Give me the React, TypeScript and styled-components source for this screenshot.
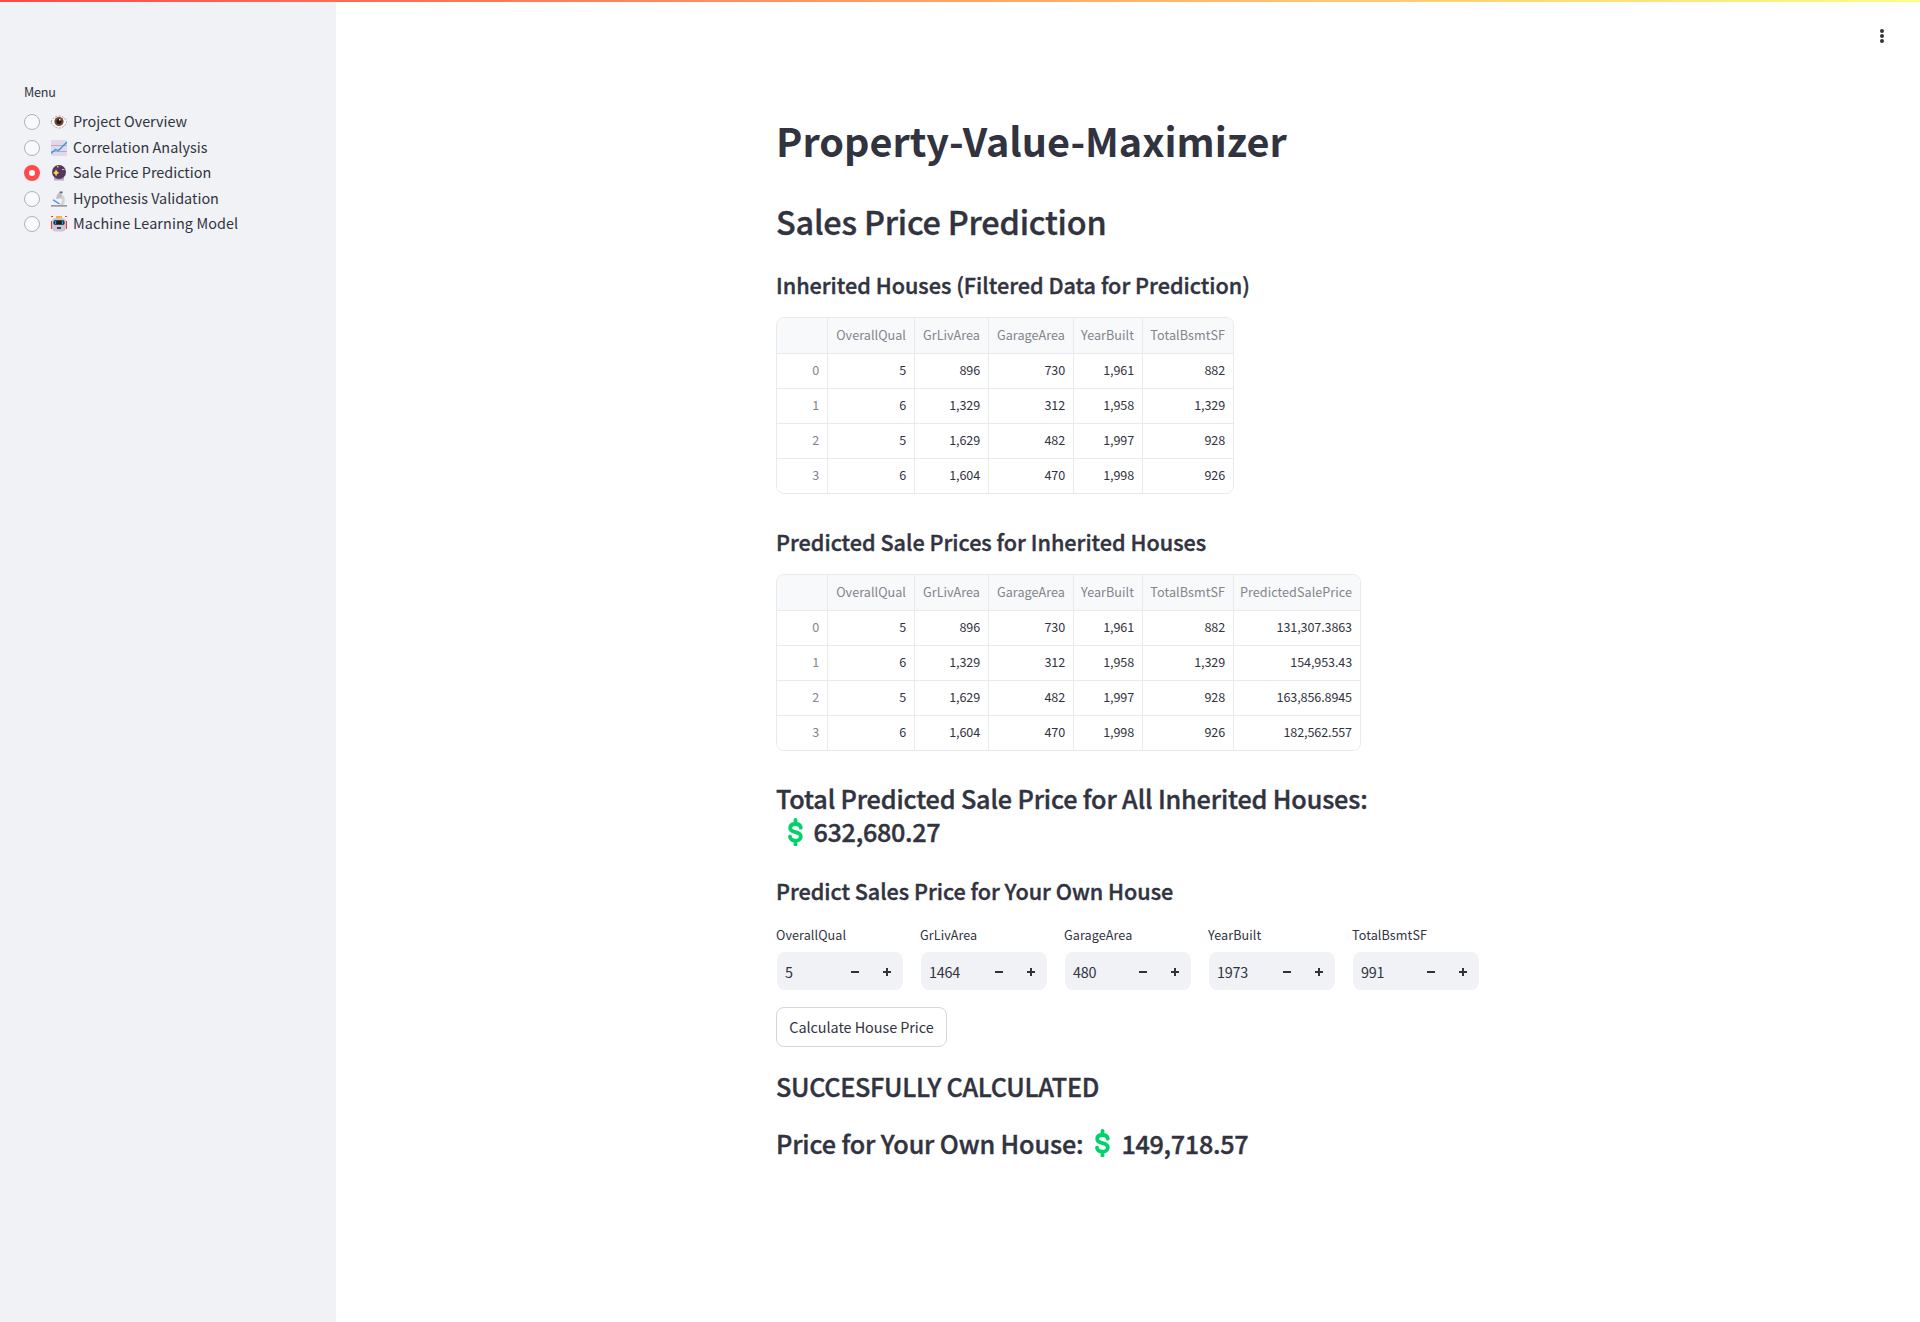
import React from "react";
import styled, { createGlobalStyle } from "styled-components";

const ink = "#31333f";
const line = "#e9eaeb";

const GlobalStyle = createGlobalStyle`
  * { box-sizing: border-box; }
  body {
    margin: 0;
    background: #fff;
    color: ${ink};
    font-family: "Noto Sans CJK SC", "Noto Sans", sans-serif;
  }
`;

const Page = styled.div`
  display: flex;
  height: 1322px;
  position: relative;
  overflow: hidden;
`;

const Decoration = styled.div`
  position: absolute;
  inset: 0 0 auto 0;
  height: 2px;
  background: linear-gradient(90deg, #ff4b4b, #fffd80);
`;

const Sidebar = styled.aside`
  width: 336px;
  flex: none;
  padding: 82px 24px 0;
  background: #f0f2f6;
`;

const MenuLabel = styled.div`
  font-size: 12.6px;
  line-height: 20px;
  letter-spacing: -0.2px;
`;

const RadioList = styled.div`
  display: flex;
  flex-direction: column;
  margin-top: 7.5px;
`;

const RadioRow = styled.div`
  display: flex;
  align-items: center;
  height: 25.5px;
  white-space: nowrap;

  svg { margin: 0 6px 0 11px; flex: none; }
`;

const RadioText = styled.span<{ $track?: number }>`
  padding-bottom: 2.4px;
  font-size: 14.4px;
  line-height: 22px;
  letter-spacing: ${(p) => p.$track ?? 0}px;
`;

const Radio = styled.span<{ $on?: boolean }>`
  width: 16px;
  height: 16px;
  flex: none;
  border-radius: 50%;
  background: ${(p) => (p.$on ? "#fff" : "#f9f9fb")};
  border: ${(p) => (p.$on ? "5px solid #ff4b4b" : "1px solid #b0b1b9")};
`;

const Main = styled.main`
  flex: 1;
  display: flex;
  justify-content: center;
  padding-top: 114px;
  position: relative;
`;

const Kebab = styled.div`
  position: absolute;
  top: 29px;
  right: 36px;
  display: flex;
  flex-direction: column;
  gap: 1px;

  i { width: 4px; height: 4px; border-radius: 50%; background: ${ink}; }
`;

const Column = styled.div`
  width: 704px;
`;

const Title = styled.h1`
  margin: 0;
  font-size: 39.6px;
  font-weight: 700;
  line-height: 52px;
`;

const Heading = styled.h2<{ $size: number; $line: number; $top: number; $track?: number }>`
  margin: ${(p) => p.$top}px 0 0;
  font-size: ${(p) => p.$size}px;
  font-weight: 500;
  line-height: ${(p) => p.$line}px;
  letter-spacing: ${(p) => p.$track ?? 0}px;
  -webkit-text-stroke: 0.4px ${ink};
  white-space: nowrap;
`;

const Amount = styled.span<{ $indent: number }>`
  display: inline-flex;
  align-items: center;
  gap: 11px;
  margin-left: ${(p) => p.$indent}px;
  vertical-align: top;
  letter-spacing: -0.3px;
`;

const Grid = styled.div<{ $cols: string; $top: number }>`
  display: grid;
  grid-template-columns: ${(p) => p.$cols};
  grid-template-rows: 36px 35px 35px 35px 34px;
  width: max-content;
  margin-top: ${(p) => p.$top}px;
  border: 1px solid ${line};
  border-radius: 8px;
  overflow: hidden;
  font-size: 12.6px;
`;

const Cell = styled.div<{ $head?: boolean; $muted?: boolean; $lastCol: boolean; $lastRow?: boolean }>`
  display: flex;
  align-items: center;
  justify-content: flex-end;
  padding: 0 8px ${(p) => (p.$head ? 2 : p.$lastRow ? 2.5 : 3.5)}px 0;
  white-space: nowrap;
  letter-spacing: ${(p) => (p.$head ? 0.05 : -0.12)}px;
  color: ${(p) => (p.$head || p.$muted ? "#83848c" : ink)};
  background: ${(p) => (p.$head ? "#f8f9fb" : "#fff")};
  border-right: ${(p) => (p.$lastCol ? "none" : `1px solid ${line}`)};
  border-bottom: ${(p) => (p.$lastRow ? "none" : `1px solid ${line}`)};
`;

const Fields = styled.div`
  display: grid;
  grid-template-columns: repeat(5, 128px);
  gap: 16px;
  margin-top: 20px;
`;

const FieldLabel = styled.div`
  font-size: 12.6px;
  line-height: 20px;
  letter-spacing: 0.08px;
`;

const NumberBox = styled.div`
  display: flex;
  align-items: center;
  height: 38px;
  margin: 7px 1px 1px;
  padding: 1px 12px 0 8px;
  border-radius: 8px;
  background: #f0f2f6;
  font-size: 14.4px;
  letter-spacing: -0.2px;

  span { flex: 1; padding-bottom: 1px; }
  svg + svg { margin-left: 24px; }
`;

const Button = styled.button`
  display: block;
  width: 171px;
  height: 40px;
  margin-top: 16px;
  padding: 0 0 2px;
  border: 1px solid #d6d6d9;
  border-radius: 8px;
  background: #fff;
  color: ${ink};
  font: 400 14.4px "Noto Sans CJK SC", "Noto Sans", sans-serif;
  letter-spacing: -0.05px;
`;

const Eye = () => (
  <svg width="16" height="16" viewBox="0 0 16 16">
    <path d="M0 8Q3 2 8 2T16 8Q13 14 8 14T0 8Z" fill="#fff" />
    <path d="M0 8Q3 2 8 2T16 8Q13 14 8 14T0 8Z" fill="none" stroke="#9b9b9b" strokeWidth="1" strokeDasharray="2 1.3" />
    <circle cx="8" cy="7.5" r="4.6" fill="#7d4533" />
    <circle cx="8" cy="7.5" r="2.5" fill="#1c1c1c" />
    <rect x="8" y="5" width="1.5" height="1.5" fill="#fff" />
  </svg>
);

const Chart = () => (
  <svg width="16" height="16" viewBox="0 0 16 16">
    <rect width="16" height="16" rx="1.5" fill="#e1d8ec" />
    <path d="M0 5.5H16M0 11.5H16" stroke="#b4acbc" />
    <path d="M0 13.5L4.5 9.5L7.5 10.5L16 2" fill="none" stroke="#2896e8" strokeWidth="1.3" />
  </svg>
);

const CrystalBall = () => (
  <svg width="16" height="16" viewBox="0 0 16 16">
    <path d="M3 12H13V15.5H3Z" fill="#b4acbc" />
    <circle cx="8" cy="7" r="7" fill="#533566" />
    <path d="M5 4.3L6.2 6.6L8.2 8L6.2 9L5 11.6L4 9L2 8L4 6.6Z" fill="#fcd53f" />
    <path d="M6 1H7.5V2.5H6ZM11 4H13.5V5H11Z" fill="#f9c23c" />
  </svg>
);

const Microscope = () => (
  <svg width="16" height="16" viewBox="0 0 16 16">
    <path d="M8 3L13 5Q15 9 12.5 14H8.5Q12 11 10.5 8L6 7Z" fill="#d3d3d3" />
    <path d="M9 0L11.5 1L10 7L5 8L6 4Z" fill="#bebebe" />
    <path d="M9.5 0.5H11.5V2H8.5Z" fill="#636363" />
    <path d="M2 8.7L8.5 13" stroke="#3b85f5" strokeWidth="1.3" />
    <path d="M0 14H16V15.7H0Z" fill="#9b9b9b" />
  </svg>
);

const Robot = () => (
  <svg width="16" height="16" viewBox="0 0 16 16">
    <path d="M0 0.5H2M14 0.5H16" stroke="#f8312f" />
    <path d="M0.5 5V13M15.5 5V13" stroke="#f8312f" />
    <path d="M5 0H11V2H5Z" fill="#ffb02e" />
    <rect x="1" y="2" width="14" height="13.5" rx="4" fill="#cdc4d6" />
    <rect x="2.5" y="4.2" width="11" height="4.6" rx="1.5" fill="#1c1c1c" />
    <path d="M4.5 5V8M11.5 5V8" stroke="#00a6ed" strokeWidth="1.4" />
    <path d="M6 12H10" stroke="#321b41" strokeWidth="1.6" />
  </svg>
);

const Dollar = () => (
  <svg width="15" height="28" viewBox="0 0 15 28">
    <path
      d="M12.8 9.6C12.4 7.2 10.4 6 7.5 6C4.4 6 2.2 7.4 2.2 10C2.2 15.6 12.8 12.8 12.8 18.4C12.8 21 10.6 22.6 7.5 22.6C4.4 22.6 2.2 21 2 18.6M7.5 2V6M7.5 22.6V26.4"
      fill="none"
      stroke="#00d26a"
      strokeWidth="3.8"
      strokeLinecap="round"
    />
  </svg>
);

const Minus = () => (
  <svg width="8" height="8" viewBox="0 0 8 8"><path d="M0 4H8" stroke={ink} strokeWidth="2" /></svg>
);
const Plus = () => (
  <svg width="8" height="8" viewBox="0 0 8 8"><path d="M0 4H8M4 0V8" stroke={ink} strokeWidth="2" /></svg>
);

const menu = [
  { icon: <Eye />, label: "Project Overview" },
  { icon: <Chart />, label: "Correlation Analysis", track: 0.05 },
  { icon: <CrystalBall />, label: "Sale Price Prediction", on: true },
  { icon: <Microscope />, label: "Hypothesis Validation" },
  { icon: <Robot />, label: "Machine Learning Model", track: 0.1 },
];

const columns = ["", "OverallQual", "GrLivArea", "GarageArea", "YearBuilt", "TotalBsmtSF"];
const houses = [
  ["0", "5", "896", "730", "1,961", "882"],
  ["1", "6", "1,329", "312", "1,958", "1,329"],
  ["2", "5", "1,629", "482", "1,997", "928"],
  ["3", "6", "1,604", "470", "1,998", "926"],
];
const predictions = ["131,307.3863", "154,953.43", "163,856.8945", "182,562.557"];
const fields = [
  ["OverallQual", "5"],
  ["GrLivArea", "1464"],
  ["GarageArea", "480"],
  ["YearBuilt", "1973"],
  ["TotalBsmtSF", "991"],
];

function DataTable({ head, rows, cols, top }: { head: string[]; rows: string[][]; cols: string; top: number }) {
  const last = head.length - 1;
  return (
    <Grid $cols={cols} $top={top}>
      {head.map((h, i) => <Cell key={h} $head $lastCol={i === last}>{h}</Cell>)}
      {rows.map((row, r) =>
        row.map((value, i) => (
          <Cell key={`${r}-${i}`} $muted={i === 0} $lastCol={i === last} $lastRow={r === rows.length - 1}>
            {value}
          </Cell>
        ))
      )}
    </Grid>
  );
}

export default function App() {
  return (
    <Page>
      <GlobalStyle />
      <Sidebar>
        <MenuLabel>Menu</MenuLabel>
        <RadioList>
          {menu.map((m) => (
            <RadioRow key={m.label}>
              <Radio $on={m.on} />
              {m.icon}
              <RadioText $track={m.track}>{m.label}</RadioText>
            </RadioRow>
          ))}
        </RadioList>
      </Sidebar>
      <Main>
        <Kebab><i /><i /><i /></Kebab>
        <Column>
          <Title>Property-Value-Maximizer</Title>
          <Heading $size={32.4} $line={44} $top={33} $track={-0.2}>Sales Price Prediction</Heading>
          <Heading $size={21.6} $line={28} $top={28}>Inherited Houses (Filtered Data for Prediction)</Heading>
          <DataTable head={columns} rows={houses} cols="51px 87px 74px 85px 69px 90px" top={18} />
          <Heading $size={21.6} $line={28} $top={34}>Predicted Sale Prices for Inherited Houses</Heading>
          <DataTable
            head={[...columns, "PredictedSalePrice"]}
            rows={houses.map((h, i) => [...h, predictions[i]])}
            cols="51px 87px 74px 85px 69px 91px 126px"
            top={18}
          />
          <Heading $size={25.2} $line={33} $top={31} $track={-0.14}>
            Total Predicted Sale Price for All Inherited Houses:
            <br />
            <Amount $indent={11.5}><Dollar />632,680.27</Amount>
          </Heading>
          <Heading $size={21.6} $line={28} $top={29} $track={-0.03}>Predict Sales Price for Your Own House</Heading>
          <Fields>
            {fields.map(([label, value]) => (
              <div key={label}>
                <FieldLabel>{label}</FieldLabel>
                <NumberBox><span>{value}</span><Minus /><Plus /></NumberBox>
              </div>
            ))}
          </Fields>
          <Button>Calculate House Price</Button>
          <Heading $size={25.2} $line={34} $top={22} $track={-0.3}>SUCCESFULLY CALCULATED</Heading>
          <Heading $size={25.2} $line={34} $top={23} $track={-0.13}>
            Price for Your Own House:<Amount $indent={12}><Dollar />149,718.57</Amount>
          </Heading>
        </Column>
      </Main>
      <Decoration />
    </Page>
  );
}
